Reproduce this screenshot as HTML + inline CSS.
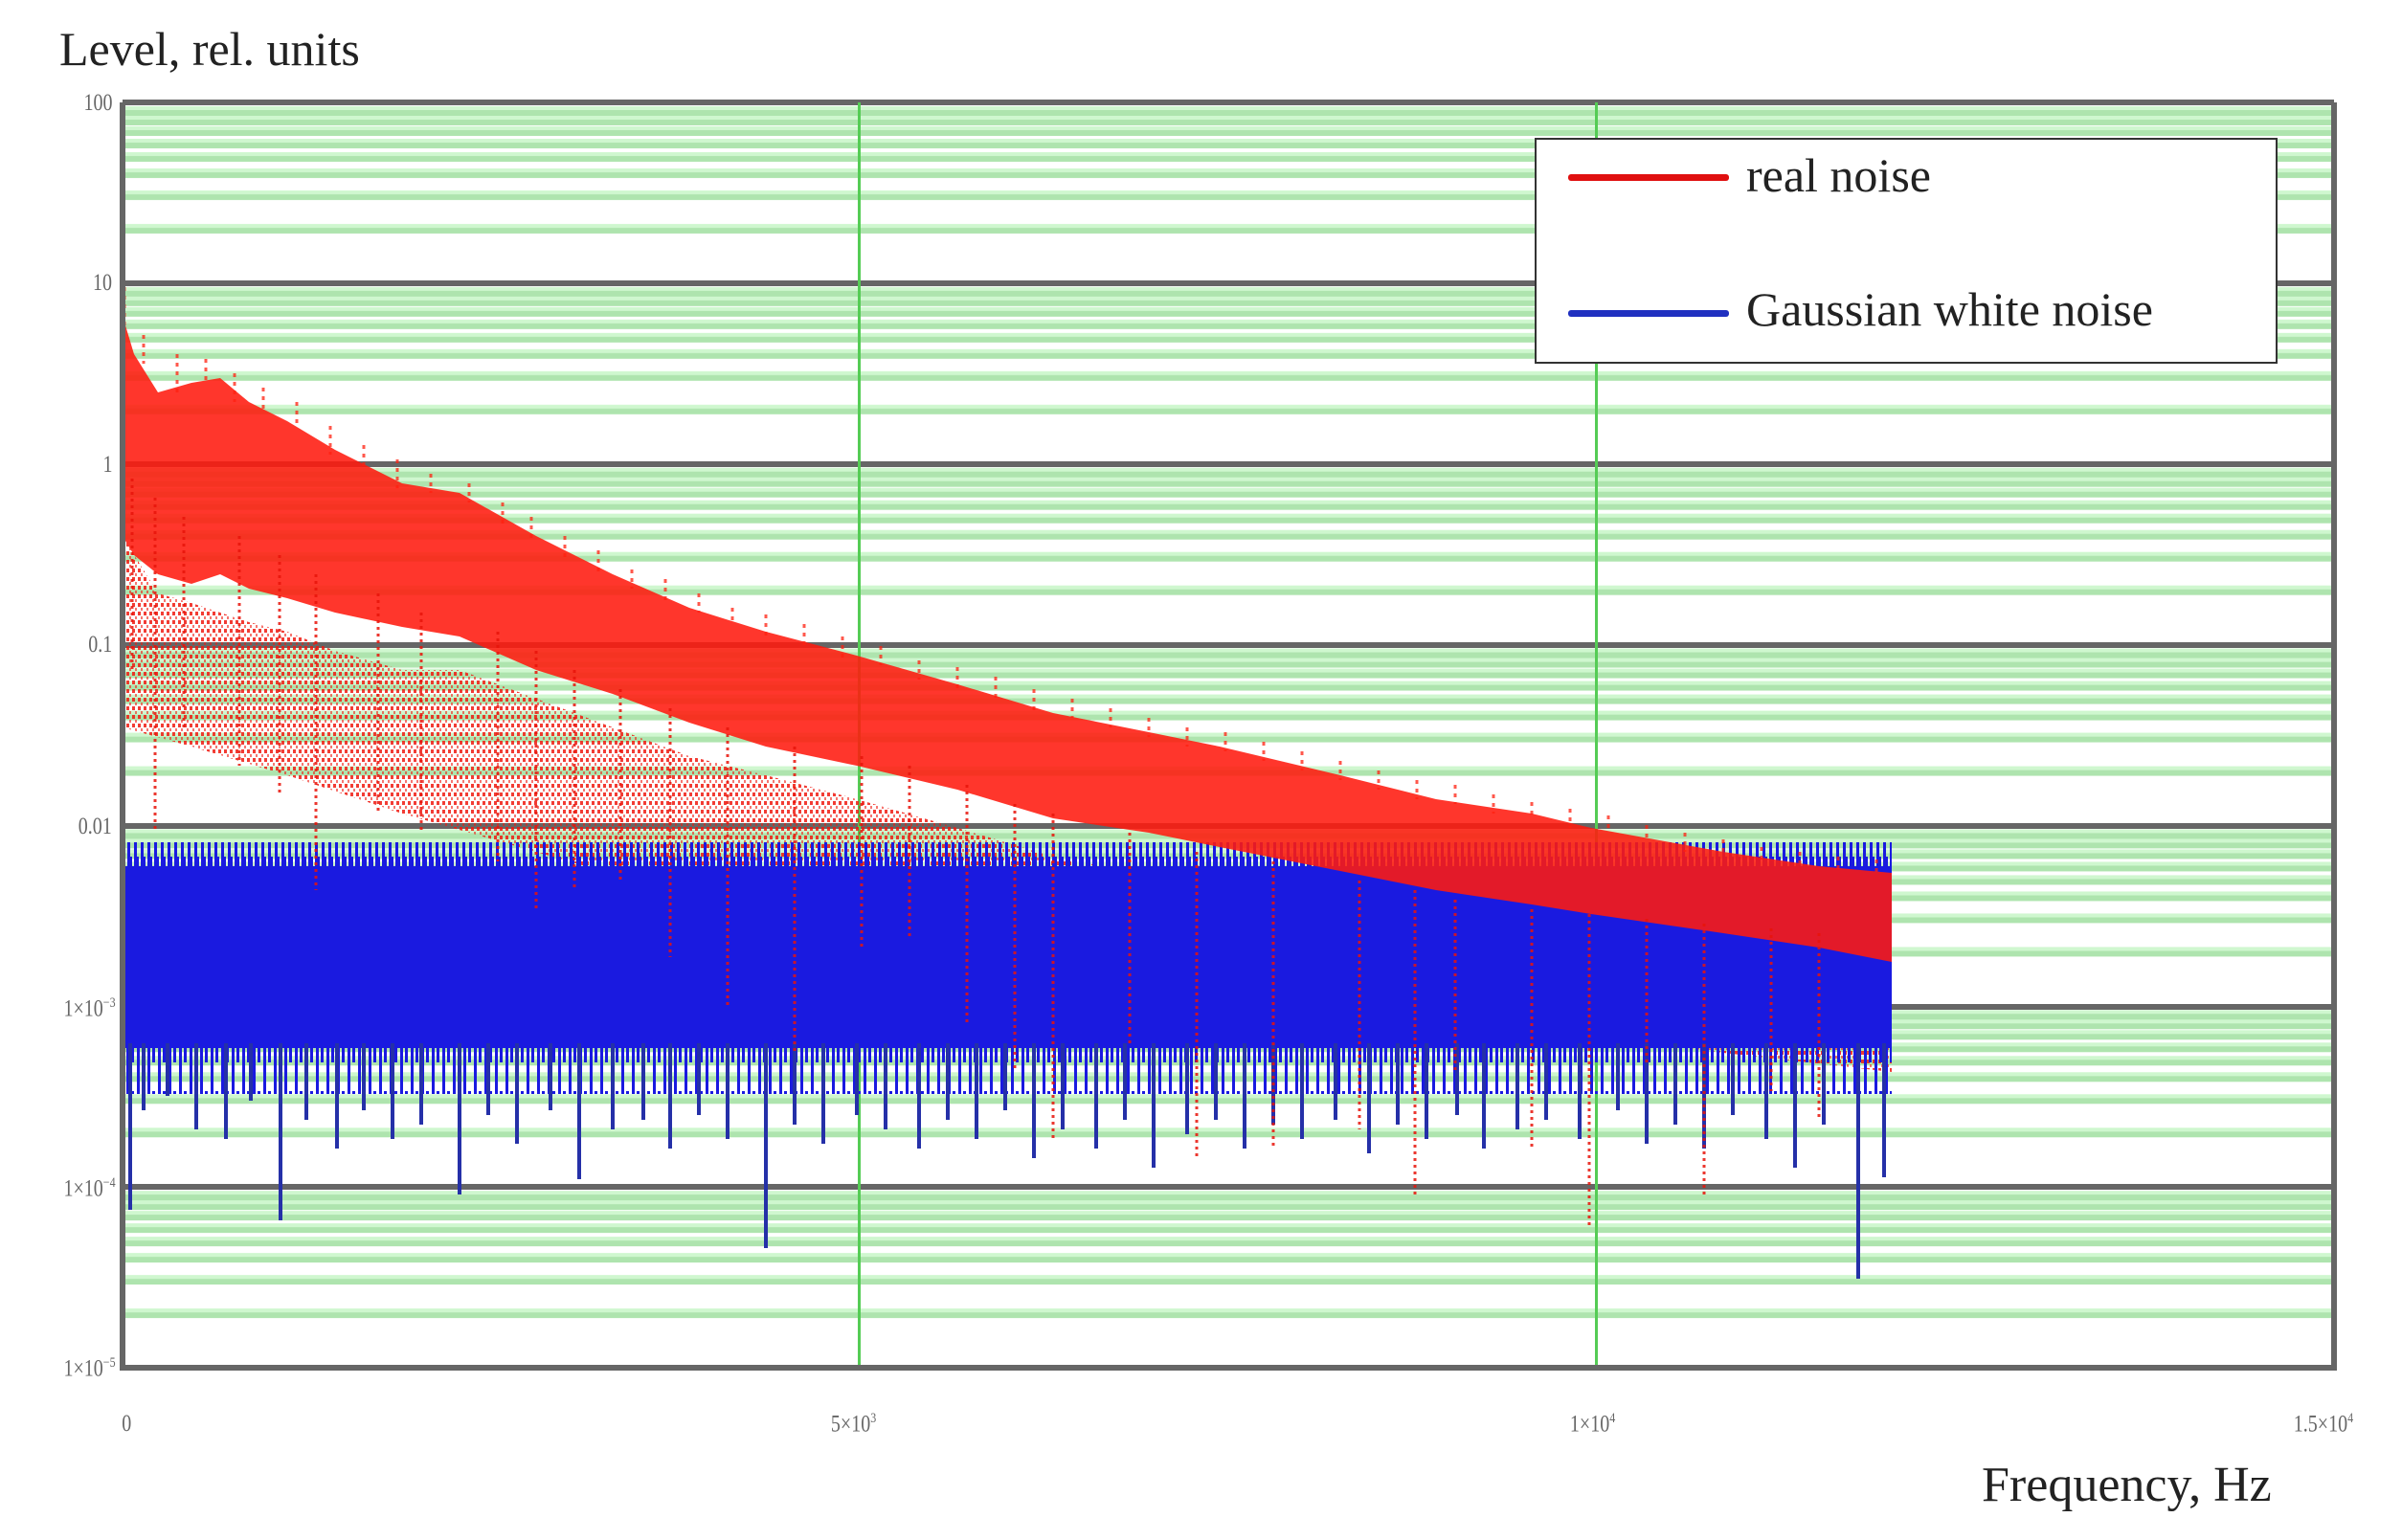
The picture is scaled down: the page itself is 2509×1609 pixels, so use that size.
<!DOCTYPE html>
<html><head><meta charset="utf-8"><style>
html,body{margin:0;padding:0;background:#fff;}
body{width:2509px;height:1609px;position:relative;overflow:hidden;font-family:"Liberation Serif",serif;}
svg{position:absolute;left:0;top:0;}
.t{position:absolute;color:#222;white-space:nowrap;}
.tk{position:absolute;color:#666;font-size:25px;white-space:nowrap;transform:scaleX(0.8);}
</style></head><body>
<svg width="2509" height="1609" viewBox="0 0 2509 1609" xmlns="http://www.w3.org/2000/svg">
<defs>
<pattern id="minor" x="0" y="107" width="10" height="188.857" patternUnits="userSpaceOnUse">
<g fill="rgb(120,210,120)" fill-opacity="0.6">
<rect x="0" y="8" width="10" height="6"/><rect x="0" y="18" width="10" height="6"/>
<rect x="0" y="29" width="10" height="6"/><rect x="0" y="42" width="10" height="6"/>
<rect x="0" y="56" width="10" height="6"/><rect x="0" y="73" width="10" height="6"/>
<rect x="0" y="96" width="10" height="6"/><rect x="0" y="131" width="10" height="6"/>
</g>
<g fill="rgb(160,240,160)" fill-opacity="0.5">
<rect x="0" y="4" width="10" height="4"/><rect x="0" y="14" width="10" height="4"/>
<rect x="0" y="25" width="10" height="4"/><rect x="0" y="38" width="10" height="4"/>
<rect x="0" y="52" width="10" height="4"/><rect x="0" y="69" width="10" height="4"/>
<rect x="0" y="92" width="10" height="4"/><rect x="0" y="127" width="10" height="4"/>
</g>
</pattern>
<pattern id="bstripe" width="7" height="40" patternUnits="userSpaceOnUse">
<rect x="0" y="0" width="3" height="40" fill="#1a1ae0"/>
<rect x="3" y="15" width="2" height="25" fill="#1a1ae0"/>
</pattern>
<pattern id="bstripe2" width="11" height="60" patternUnits="userSpaceOnUse">
<rect x="0" y="0" width="3" height="60" fill="#1a1ae0"/>
<rect x="5" y="0" width="3" height="30" fill="#1a1ae0"/>
</pattern>
<pattern id="rdots" width="6" height="9" patternUnits="userSpaceOnUse">
<rect x="0" y="0" width="3" height="4" fill="#f01a10" fill-opacity="0.85"/>
<rect x="3" y="5" width="2" height="3" fill="#f01a10" fill-opacity="0.6"/>
</pattern>
</defs>
<rect x="128" y="107" width="2310" height="1322" fill="url(#minor)"/>
<g fill="#666">
<rect x="128" y="104" width="2310" height="6"/><rect x="128" y="293" width="2310" height="6"/>
<rect x="128" y="482" width="2310" height="6"/><rect x="128" y="671" width="2310" height="6"/>
<rect x="128" y="860" width="2310" height="6"/><rect x="128" y="1049" width="2310" height="6"/>
<rect x="128" y="1237" width="2310" height="6"/>
</g>
<rect x="896" y="107" width="3" height="1322" fill="#5c5"/>
<rect x="1666" y="107" width="3" height="1322" fill="#5c5"/>

<polygon fill="url(#rdots)" points="128,560 165,620 200,630 260,650 300,660 350,680 420,700 480,700 560,730 640,760 720,790 800,810 895,835 1000,865 1100,895 1200,915 1274,930 1400,960 1500,985 1600,1000 1662,1015 1800,1040 1900,1055 1976,1062 1976,1120 1800,1100 1662,1080 1500,1060 1274,1040 1000,1000 800,960 560,890 420,850 300,810 200,780 128,760"/>

<rect x="130" y="905" width="1846" height="190" fill="#1a1ae0"/>
<rect x="130" y="880" width="1846" height="28" fill="url(#bstripe)"/>
<rect x="130" y="1093" width="1846" height="50" fill="url(#bstripe2)"/>
<g stroke="#2530a8" stroke-width="4">
<path d="M136 1090V1264M150 1090V1160M175 1090V1145M205 1090V1180M236 1090V1190M262 1090V1150M293 1090V1275M320 1090V1170M352 1090V1200M380 1090V1160M410 1090V1190M440 1090V1175M480 1090V1248M510 1090V1165M540 1090V1195M575 1090V1160M605 1090V1232M640 1090V1180M672 1090V1170M700 1090V1200M730 1090V1165M760 1090V1190M800 1090V1304M830 1090V1175M860 1090V1195M895 1090V1165M925 1090V1180M960 1090V1200M990 1090V1170M1020 1090V1190M1050 1090V1160M1080 1090V1210M1110 1090V1180M1145 1090V1200M1175 1090V1170M1205 1090V1220M1240 1090V1185M1270 1090V1170M1300 1090V1200M1330 1090V1175M1360 1090V1190M1395 1090V1170M1430 1090V1205M1460 1090V1175M1490 1090V1190M1522 1090V1165M1550 1090V1200M1585 1090V1180M1615 1090V1170M1650 1090V1190M1690 1090V1160M1720 1090V1195M1750 1090V1175M1780 1090V1200M1810 1090V1165M1845 1090V1190M1875 1090V1220M1905 1090V1175M1941 1090V1336M1968 1090V1230"/>
</g>
<polygon fill="#ff1a0f" fill-opacity="0.88" points="128,330 140,370 165,410 200,400 230,395 260,420 300,440 350,470 420,505 480,515 560,560 640,600 720,635 800,660 895,685 1000,715 1100,745 1200,765 1274,780 1400,810 1500,835 1600,850 1662,865 1800,890 1900,905 1976,912 1976,1005 1900,990 1800,975 1662,955 1600,945 1500,930 1400,910 1274,885 1200,870 1100,855 1000,825 895,800 800,780 720,755 640,725 560,700 480,665 420,655 350,640 300,625 260,615 230,600 200,610 165,600 140,580 128,560"/>
<g stroke="#ff2010" stroke-width="3" stroke-opacity="0.75" stroke-dasharray="4 5">
<path d="M130 300V340M150 350V380M185 370V410M215 375V400M245 390V420M275 405V430M310 420V445M345 445V475M380 465V490M415 480V510M450 495V515M490 505V525M525 525V550M555 540V565M590 560V585M625 575V600M660 595V615M695 605V630M730 620V640M765 635V650M800 642V665M840 652V675M880 665V690M920 675V695M960 690V710M1000 697V720M1040 707V730M1080 720V745M1120 730V750M1160 740V760M1200 750V770M1240 760V780M1280 765V785M1320 775V795M1360 785V805M1400 795V815M1440 805V825M1480 815V835M1520 820V840M1560 830V850M1600 838V855M1640 845V865M1680 852V870M1720 862V880M1760 870V890M1800 877V895M1840 885V900M1880 890V905M1920 895V910M1960 898V915"/>
</g>
<g stroke="#e8140a" stroke-width="3" stroke-dasharray="3 4" stroke-opacity="0.85">
<path d="M138 500V700M162 520V870M192 540V760M250 560V800M292 580V830M330 600V930M395 620V850M440 640V870M520 660V900M560 680V950M600 700V930M648 720V920M700 740V1000M760 760V1050M830 780V1100M900 790V990M950 800V980M1010 820V1070M1060 840V1120M1100 850V1190M1180 870V1090M1250 890V1210M1330 900V1200M1420 920V1180M1478 930V1250M1520 940V1120M1600 950V1200M1660 955V1280M1720 960V1110M1780 965V1250M1850 970V1140M1900 975V1170"/>
</g>

<g fill="#666">
<rect x="125" y="107" width="6" height="1322"/>
<rect x="2435" y="107" width="6" height="1325"/>
<rect x="125" y="1426" width="2316" height="6"/>
</g>
</svg>
<div class="t" style="left:62px;top:22px;font-size:50px;">Level, rel. units</div>
<div class="t" style="left:2070px;top:1522px;font-size:52px;">Frequency, Hz</div>
<div class="tk" style="right:2392px;top:94px;transform-origin:right;">100</div>
<div class="tk" style="right:2392px;top:282px;transform-origin:right;">10</div>
<div class="tk" style="right:2392px;top:472px;transform-origin:right;">1</div>
<div class="tk" style="right:2392px;top:660px;transform-origin:right;">0.1</div>
<div class="tk" style="right:2392px;top:850px;transform-origin:right;">0.01</div>
<div class="tk" style="right:2388px;top:1040px;transform-origin:right;">1×10<sup style="font-size:15px">−3</sup></div>
<div class="tk" style="right:2388px;top:1228px;transform-origin:right;">1×10<sup style="font-size:15px">−4</sup></div>
<div class="tk" style="right:2388px;top:1416px;transform-origin:right;">1×10<sup style="font-size:15px">−5</sup></div>
<div class="tk" style="left:126px;top:1474px;">0</div>
<div class="tk" style="left:862px;top:1474px;">5×10<sup style="font-size:15px">3</sup></div>
<div class="tk" style="left:1634px;top:1474px;">1×10<sup style="font-size:15px">4</sup></div>
<div class="tk" style="left:2388px;top:1474px;">1.5×10<sup style="font-size:15px">4</sup></div>
<div style="position:absolute;left:1603px;top:144px;width:772px;height:232px;border:2px solid #333;background:#fff;"></div>
<div style="position:absolute;left:1638px;top:182px;width:168px;height:7px;background:#e01010;border-radius:3px;"></div>
<div style="position:absolute;left:1638px;top:324px;width:168px;height:7px;background:#2030c0;border-radius:3px;"></div>
<div class="t" style="left:1824px;top:154px;font-size:50px;">real noise</div>
<div class="t" style="left:1824px;top:294px;font-size:50px;">Gaussian white noise</div>
</body></html>
